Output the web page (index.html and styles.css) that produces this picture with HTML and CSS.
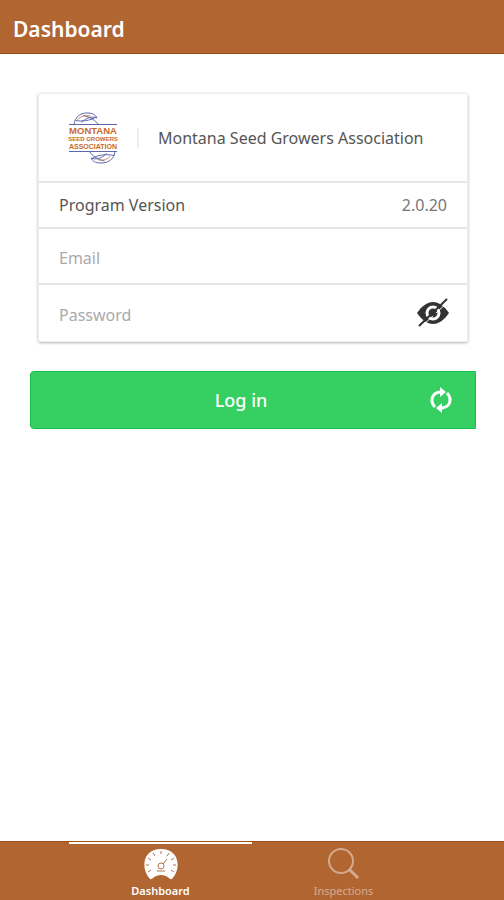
FILE: index.html
```html
<!DOCTYPE html>
<html lang="en">
<head>
  <meta charset="UTF-8">
  <meta name="viewport" content="width=device-width, initial-scale=1">
  <title>Dashboard</title>
  <link rel="stylesheet" href="styles.css">
</head>
<body>
  <header class="bar">
    <h1>Dashboard</h1>
  </header>

  <main>
    <form class="login" onsubmit="return false">
      <div class="card">
        <div class="item brand">
          <svg class="logo" viewBox="0 0 100 104" aria-hidden="true">
            <g fill="none" stroke="#5d68ab" stroke-width="2">
              <path d="M2 25H98M2 79H98"/>
              <path d="M12 25C14 10 24 2 38 2C50 2 55 6 58 12C48 8 37 11 27 21"/>
              <path d="M30 7C45 10 55 17 61 25M15 17C27 19 43 18 57 10"/>
              <path d="M94 79C92 94 82 102 66 102C54 102 49 98 46 92C56 96 67 93 77 83"/>
              <path d="M43 79C48 88 60 95 73 98M48 93C62 85 76 84 93 87"/>
            </g>
            <path d="M19 15C27 8 36 6 45 8M84 89C77 96 68 98 59 95" fill="none" stroke="#c98762" stroke-width="2"/>
            <g class="logo-text" text-anchor="middle">
              <text x="50" y="44" font-size="19">MONTANA</text>
              <text x="50" y="58" font-size="12">SEED GROWERS</text>
              <text x="50" y="73" font-size="14">ASSOCIATION</text>
            </g>
          </svg>
          <h2>Montana Seed Growers Association</h2>
        </div>
        <div class="item version">
          <span>Program Version</span>
          <span class="note">2.0.20</span>
        </div>
        <div class="item field">
          <input type="email" id="email" placeholder="Email" aria-label="Email">
        </div>
        <div class="item field">
          <input type="password" id="password" placeholder="Password" aria-label="Password">
          <button type="button" class="eye" aria-label="Show password" onclick="togglePassword()">
            <svg viewBox="0 0 34 30">
              <path d="M1 15C6 8 11 4 17 4S28 8 33 15C28 22 23 26 17 26S6 22 1 15Z" fill="#333"/>
              <circle cx="17" cy="15" r="6" fill="none" stroke="#fff" stroke-width="3"/>
              <path d="M5 29L33 3" stroke="#fff" stroke-width="1"/>
              <path d="M3 28L31 1" stroke="#333" stroke-width="2"/>
              <path d="M14 18V15L17 12V14H20V17L17 18Z" fill="#333"/>
            </svg>
          </button>
        </div>
      </div>

      <button type="submit" class="submit">
        <span>Log in</span>
        <svg viewBox="0 0 24 26" aria-hidden="true">
          <g fill="none" stroke="#fff" stroke-width="3">
            <path d="M6 20C1 15 2 6 11 5H13"/>
            <path d="M18 6C23 11 22 20 13 21H11"/>
          </g>
          <path d="M11 0L17 5L11 10ZM13 16L7 21L13 26Z" fill="#fff"/>
        </svg>
      </button>
    </form>
  </main>

  <nav class="tabs">
    <a href="#dashboard" class="tab active">
      <svg viewBox="0 0 36 34" aria-hidden="true">
        <path d="M7 31C-3 20 0 1 18 1S39 20 29 31C26 32 25 27 18 27S10 32 7 31Z" fill="#fff"/>
        <g fill="none" stroke="#b87348" stroke-width="1">
          <path d="M18 3V6M10 5L12 8M26 5L24 8M5 10L8 12M31 10L28 12M3 17H6M33 17H30M5 24L8 22M31 24L28 22"/>
          <circle cx="18" cy="18" r="3"/>
          <path d="M20 16L24 11M14 23H22"/>
        </g>
      </svg>
      <span>Dashboard</span>
    </a>
    <a href="#inspections" class="tab">
      <svg viewBox="0 0 36 34" aria-hidden="true">
        <circle cx="15" cy="13" r="12" fill="none" stroke="#fff" stroke-width="2"/>
        <path d="M23 21L32 30" stroke="#fff" stroke-width="3"/>
      </svg>
      <span>Inspections</span>
    </a>
  </nav>

  <script>
    function togglePassword() {
      const field = document.getElementById("password");
      field.type = field.type === "password" ? "text" : "password";
    }
  </script>
</body>
</html>
```
FILE: styles.css
```css
* {
  box-sizing: border-box;
}

body {
  display: flex;
  flex-direction: column;
  min-height: 100vh;
  margin: 0;
  background: #fff;
  color: #555;
  font-family: "Noto Sans", "Open Sans", sans-serif;
  font-size: 16px;
}

h1, h2 {
  margin: 0;
}

.bar {
  padding: 16px 13px 11px;
  background: #b16531;
  border-bottom: 1px solid #9e5014;
  color: #fff;
}

.bar h1 {
  font-size: 21px;
  font-weight: 600;
  line-height: 26px;
}

main {
  flex: 1;
  padding: 39px 28px 20px 30px;
}

.card {
  margin: 0 8px 29px;
  border: 1px solid #eee;
  border-radius: 3px;
  box-shadow: 0 1px 3px rgba(0, 0, 0, 0.3);
}

.item {
  display: flex;
  align-items: center;
  padding: 0 20px;
  border-bottom: 2px solid #e6e6e6;
}

.item:last-child {
  border-bottom: 0;
}

.brand {
  min-height: 89px;
  padding-left: 29px;
}

.logo {
  width: 50px;
  height: 52px;
  margin-right: 19px;
}

.logo-text {
  fill: #c56b2d;
  font-family: "Liberation Sans", sans-serif;
  font-weight: bold;
}

.brand h2 {
  padding-left: 19px;
  border-left: 2px solid #eee;
  font-size: 16px;
  font-weight: 400;
  line-height: 20px;
}

.version {
  justify-content: space-between;
  min-height: 46px;
}

.note {
  color: #777;
}

.field {
  min-height: 56px;
}

.field input {
  flex: 1;
  min-width: 0;
  padding: 4px 0 0;
  border: 0;
  outline: 0;
  background: transparent;
  color: #444;
  font: inherit;
}

.field input::placeholder {
  color: #aaa;
}

.eye {
  width: 34px;
  height: 30px;
  margin-right: -3px;
  padding: 0;
  border: 0;
  background: transparent;
  cursor: pointer;
}

.eye svg {
  display: block;
}

.submit {
  display: flex;
  align-items: center;
  width: 100%;
  height: 58px;
  padding: 0 22px;
  border: 1px solid #16be50;
  border-radius: 4px 0 0 4px;
  background: #35cf62;
  color: #fff;
  font: 500 18px "Noto Sans", "Open Sans", sans-serif;
  cursor: pointer;
}

.submit span {
  flex: 1;
}

.submit svg {
  width: 24px;
  height: 26px;
}

.tabs {
  display: flex;
  justify-content: center;
  height: 59px;
  background: #b16531;
  border-top: 1px solid #9e5014;
}

.tab {
  display: flex;
  flex: 0 1 183px;
  flex-direction: column;
  align-items: center;
  padding-top: 4px;
  border-top: 2px solid transparent;
  color: #fff;
  font-size: 11px;
  line-height: 14px;
  text-decoration: none;
}

.tab svg {
  width: 36px;
  height: 34px;
  margin-bottom: 2px;
}

.tab:not(.active) svg,
.tab:not(.active) span {
  opacity: 0.45;
}

.tab.active {
  border-top-color: #fff;
  font-weight: 600;
}
```
